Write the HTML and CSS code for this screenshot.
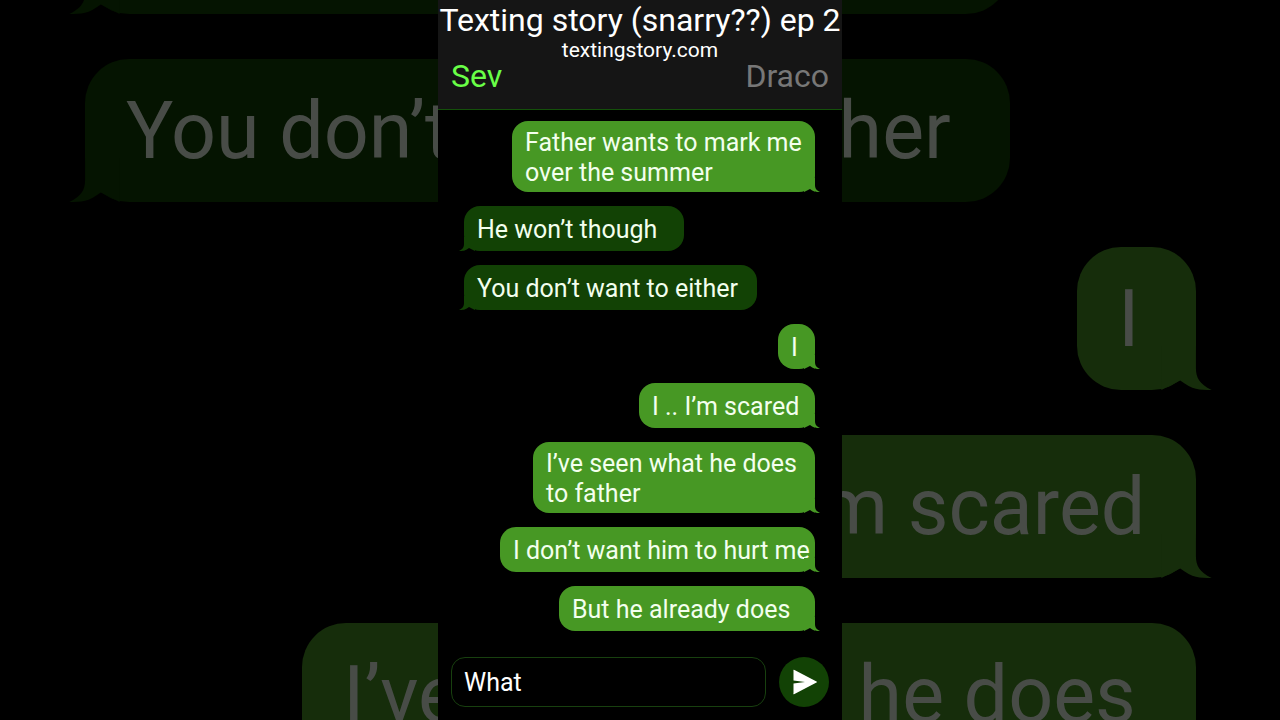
FILE: index.html
```html
<!DOCTYPE html>
<html lang="en">
<head>
<meta charset="utf-8">
<title>Texting story (snarry??) ep 2</title>
<link rel="stylesheet" href="styles.css">
</head>
<body>
<svg class="sprite" aria-hidden="true">
  <symbol id="tail" viewBox="0 0 16 14"><path d="M0 0H11V7C11 10 12 12 16 14C12 14 10 14 6 11L0 14Z"/></symbol>
</svg>

<div class="backdrop" aria-hidden="true">
  <div class="bubble received b-either"><svg class="tail"><use href="#tail"/></svg></div>
  <div class="bubble received b-either">You don’t want to either<svg class="tail"><use href="#tail"/></svg></div>
  <div class="bubble sent b-i">I<svg class="tail"><use href="#tail"/></svg></div>
  <div class="bubble sent b-scared">I .. I’m scared<svg class="tail"><use href="#tail"/></svg></div>
  <div class="bubble sent b-seen">I’ve seen what he does<svg class="tail"><use href="#tail"/></svg></div>
</div>

<main class="phone">
  <header class="header">
    <h1 class="title">Texting story (snarry??) ep 2</h1>
    <p class="site">textingstory.com</p>
    <div class="names">
      <span class="name active">Sev</span>
      <span class="name">Draco</span>
    </div>
  </header>

  <section class="messages">
    <div class="bubble sent b-father">Father wants to mark me<br>over the summer<svg class="tail"><use href="#tail"/></svg></div>
    <div class="bubble received b-though">He won’t though<svg class="tail"><use href="#tail"/></svg></div>
    <div class="bubble received b-either">You don’t want to either<svg class="tail"><use href="#tail"/></svg></div>
    <div class="bubble sent b-i">I<svg class="tail"><use href="#tail"/></svg></div>
    <div class="bubble sent b-scared">I .. I’m scared<svg class="tail"><use href="#tail"/></svg></div>
    <div class="bubble sent b-seen">I’ve seen what he does<br>to father<svg class="tail"><use href="#tail"/></svg></div>
    <div class="bubble sent b-hurt">I don’t want him to hurt me<svg class="tail"><use href="#tail"/></svg></div>
    <div class="bubble sent b-already">But he already does<svg class="tail"><use href="#tail"/></svg></div>
  </section>

  <form class="composer">
    <input class="field" type="text" value="What" aria-label="Message">
    <button class="send" type="button" aria-label="Send">
      <svg class="plane" viewBox="0 0 26 26"><path d="M2.500 1.500Q2 0.500 3.500 1L25.500 12.500Q26.500 13 25.500 13.500L3.500 25Q2 25.500 2.500 24V14.500L14 13L2.500 11.500Z"/></svg>
    </button>
  </form>
</main>
</body>
</html>
```
FILE: styles.css
```css
* { box-sizing: border-box; }

body {
  margin: 0;
  height: 100vh;
  position: relative;
  overflow: hidden;
  display: flex;
  justify-content: center;
  background: #000;
  color: #fff;
  font-family: Roboto, "Liberation Sans", sans-serif;
}

.sprite { position: absolute; width: 0; height: 0; }

.phone {
  position: relative;
  height: 100%;
  min-width: 0;
  aspect-ratio: 101 / 180;
  display: flex;
  flex-direction: column;
  background: #000;
}

.header {
  background: #151515;
  border-bottom: 1px solid #14500a;
  padding-bottom: 16px;
  text-align: center;
  white-space: nowrap;
}

.title {
  margin: 0;
  display: flex;
  justify-content: center;
  font-size: 32px;
  font-weight: 400;
  line-height: 41px;
}

.site { margin: 0; font-size: 21px; line-height: 18px; }

.names {
  display: flex;
  justify-content: space-between;
  padding: 0 13px;
  font-size: 32px;
  line-height: 34px;
}

.name { color: #777; }
.name.active { color: #69ff47; }

.messages {
  flex: 1;
  display: flex;
  flex-direction: column;
  gap: 14px;
  padding: 11px 27px 0 26px;
}

.bubble {
  position: relative;
  min-height: 45px;
  padding: 7px 0 4px 13px;
  display: block;
  border-radius: 16px;
  font-size: 25px;
  line-height: 30px;
  white-space: nowrap;
  align-content: center;
}

.sent { align-self: flex-end; background: #479824; color: #f3ffee; }
.received { align-self: flex-start; background: #124205; color: #f3ffee; }

.tail {
  position: absolute;
  bottom: 0;
  right: -5px;
  width: 16px;
  height: 14px;
  fill: #479824;
}

.received .tail {
  right: auto;
  left: -5px;
  fill: #124205;
  transform: scaleX(-1);
}

.b-father { width: 303px; }
.b-though { width: 220px; }
.b-either { width: 293px; }
.b-i { width: 37px; }
.b-scared { width: 176px; }
.b-seen { width: 282px; }
.b-hurt { width: 315px; }
.b-already { width: 256px; }

.composer {
  display: flex;
  gap: 13px;
  padding: 0 13px 13px;
}

.field {
  flex: 1;
  min-width: 0;
  height: 50px;
  padding: 0 12px;
  background: #000;
  border: 1px solid #18400f;
  border-radius: 14px;
  color: #fff;
  font: inherit;
  font-size: 25px;
}

.send {
  width: 50px;
  height: 50px;
  padding: 0;
  border: 0;
  border-radius: 50%;
  background: #124205;
  display: grid;
  place-items: center;
}

.plane { width: 26px; height: 26px; fill: #fff; }

/* Enlarged, dimmed copy of the conversation behind the phone */
.backdrop {
  position: absolute;
  inset: -129px 0 0;
  padding: 0 84px 0 85px;
  overflow: hidden;
  display: flex;
  flex-direction: column;
  gap: 45px;
}

.backdrop .bubble {
  flex-shrink: 0;
  min-height: 143px;
  padding: 18px 0 18px 41px;
  border-radius: 44px;
  font-size: 79px;
  line-height: 94px;
  color: #484c47;
}

.backdrop .sent { background: #162d0b; }
.backdrop .received { background: #051401; }
.backdrop .tail { width: 51px; height: 44px; right: -16px; fill: #162d0b; }
.backdrop .received .tail { right: auto; left: -16px; fill: #051401; }

.backdrop .b-either { width: 925px; }
.backdrop .b-i { width: 119px; }
.backdrop .b-scared { width: 557px; }
.backdrop .b-seen { width: 894px; }
```
